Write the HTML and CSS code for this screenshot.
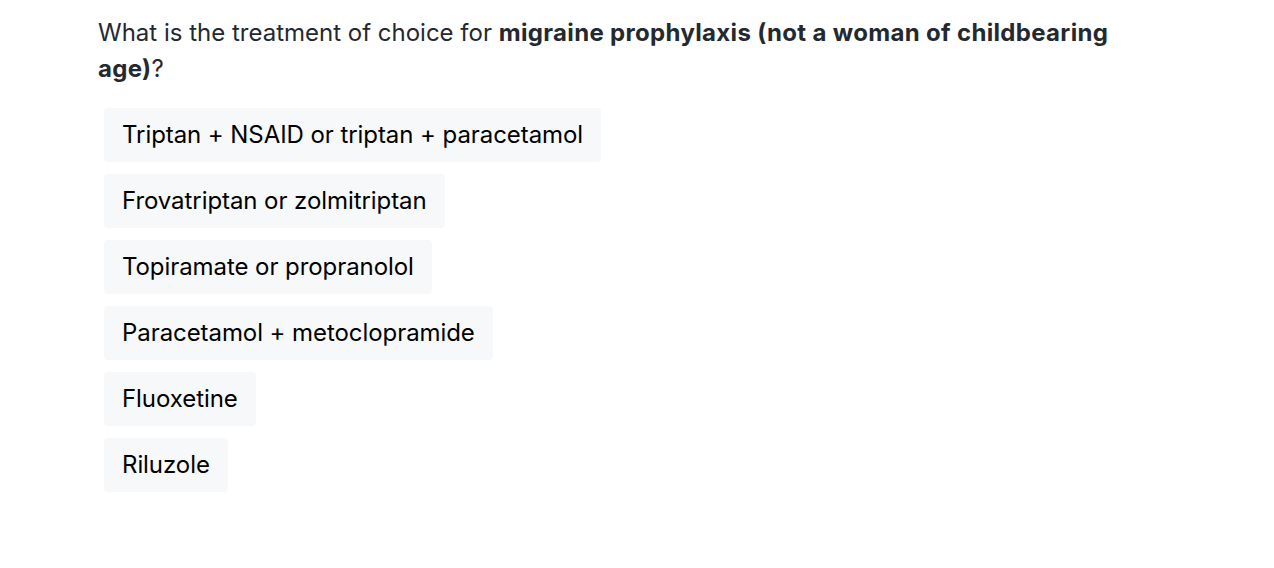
FILE: index.html
```html
<!DOCTYPE html>
<html>
<head>
<meta charset="utf-8">
<link rel="stylesheet" href="styles.css">
</head>
<body>
<div class="quiz">
  <p class="question">What is the treatment of choice for <strong>migraine prophylaxis (not a woman of childbearing age)</strong>?</p>
  <ul class="options">
    <li class="option">Triptan + NSAID or triptan + paracetamol</li>
    <li class="option">Frovatriptan or zolmitriptan</li>
    <li class="option">Topiramate or propranolol</li>
    <li class="option">Paracetamol + metoclopramide</li>
    <li class="option">Fluoxetine</li>
    <li class="option">Riluzole</li>
  </ul>
</div>
</body>
</html>
```

FILE: styles.css
```css
html, body {
  margin: 0;
  padding: 0;
  background: #ffffff;
}
body {
  font-family: Inter, "Noto Sans", sans-serif;
}
.quiz {
  padding: 15px 0 0 98px;
  width: 1040px;
}
.question {
  margin: 0;
  font-size: 24px;
  line-height: 36px;
  color: #24292f;
}
.question strong {
  font-weight: 700;
  letter-spacing: 0.33px;
}
.options {
  list-style: none;
  margin: 21px 0 0 6px;
  padding: 0;
  display: flex;
  flex-direction: column;
  align-items: flex-start;
  gap: 12px;
}
.option {
  background: #f6f8fa;
  border-radius: 4px;
  padding: 9px 18px;
  font-size: 24px;
  line-height: 36px;
  letter-spacing: -0.07px;
  color: #000000;
}
```
